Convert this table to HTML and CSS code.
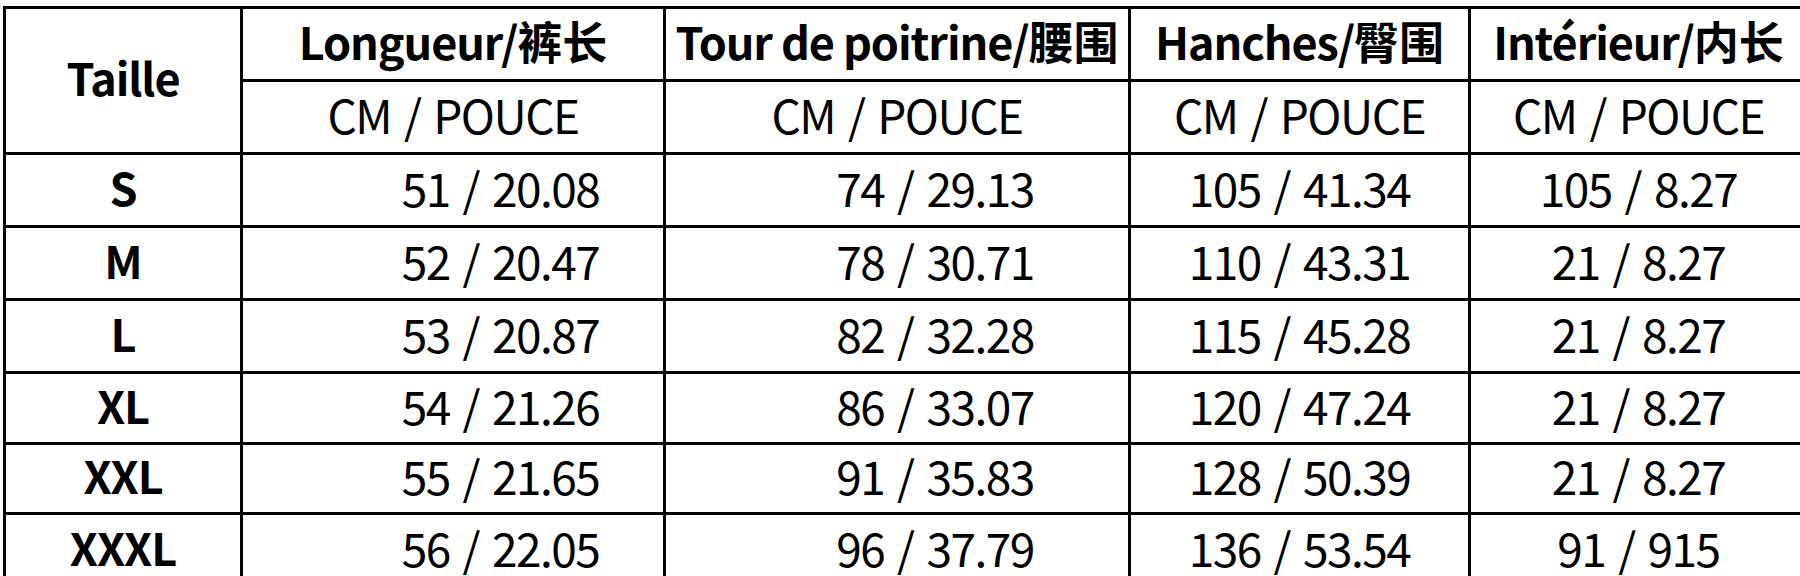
FILE: index.html
```html
<!DOCTYPE html>
<html lang="fr">
<head>
<meta charset="utf-8">
<title>Tableau des tailles</title>
<link rel="stylesheet" href="styles.css">
</head>
<body>
<table class="size-table">
  <colgroup>
    <col class="c-size">
    <col class="c-len">
    <col class="c-waist">
    <col class="c-hip">
    <col class="c-inseam">
  </colgroup>
  <thead>
    <tr class="r-h1">
      <th rowspan="2" class="size-head">Taille</th>
      <th>Longueur/<span class="cjk">裤长</span></th>
      <th>Tour de poitrine/<span class="cjk">腰围</span></th>
      <th>Hanches/<span class="cjk">臀围</span></th>
      <th>Intérieur/<span class="cjk">内长</span></th>
    </tr>
    <tr class="r-h2">
      <td>CM / POUCE</td>
      <td>CM / POUCE</td>
      <td>CM / POUCE</td>
      <td>CM / POUCE</td>
    </tr>
  </thead>
  <tbody>
    <tr class="r-a"><th>S</th><td class="shift-a">51 / 20.08</td><td class="shift-b">74 / 29.13</td><td>105 / 41.34</td><td>105 / 8.27</td></tr>
    <tr class="r-a"><th>M</th><td class="shift-a">52 / 20.47</td><td class="shift-b">78 / 30.71</td><td>110 / 43.31</td><td>21 / 8.27</td></tr>
    <tr class="r-a"><th>L</th><td class="shift-a">53 / 20.87</td><td class="shift-b">82 / 32.28</td><td>115 / 45.28</td><td>21 / 8.27</td></tr>
    <tr class="r-b"><th>XL</th><td class="shift-a">54 / 21.26</td><td class="shift-b">86 / 33.07</td><td>120 / 47.24</td><td>21 / 8.27</td></tr>
    <tr class="r-c"><th>XXL</th><td class="shift-a">55 / 21.65</td><td class="shift-b">91 / 35.83</td><td>128 / 50.39</td><td>21 / 8.27</td></tr>
    <tr class="r-a"><th>XXXL</th><td class="shift-a">56 / 22.05</td><td class="shift-b">96 / 37.79</td><td>136 / 53.54</td><td>91 / 915</td></tr>
  </tbody>
</table>
</body>
</html>
```

FILE: styles.css
```css
html, body {
  margin: 0;
  padding: 0;
  background: #ffffff;
  overflow: hidden;
}

body {
  width: 1800px;
  height: 576px;
  font-family: "Noto Sans CJK SC", sans-serif;
  color: #000000;
}

.size-table {
  border-collapse: collapse;
  table-layout: fixed;
  width: 1803px;
  margin: 6px 0 0 3px;
}

.c-size { width: 237px; }
.c-len { width: 423px; }
.c-waist { width: 465px; }
.c-hip { width: 340px; }
.c-inseam { width: 338px; }

.size-table th,
.size-table td {
  border: 3px solid #000000;
  padding: 0 0 8px 0;
  text-align: center;
  vertical-align: middle;
  white-space: nowrap;
  line-height: 1;
}

.size-table th {
  font-weight: 700;
  font-size: 45px;
  letter-spacing: -1.1px;
}

.size-table td {
  font-weight: 400;
  font-size: 46px;
  letter-spacing: -1.5px;
  word-spacing: 4px;
  padding-bottom: 7px;
}

.size-table .cjk {
  font-size: 45px;
  letter-spacing: 0;
}

.r-h1 { height: 73px; }
.r-h2 { height: 73px; }
.r-a { height: 73px; }
.r-b { height: 71px; }
.r-c { height: 70px; }

.size-table td.shift-a { padding-left: 95px; }
.size-table td.shift-b { padding-left: 76px; }
```
